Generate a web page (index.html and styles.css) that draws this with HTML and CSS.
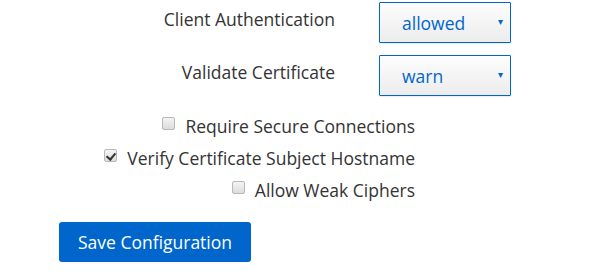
FILE: index.html
```html
<!DOCTYPE html>
<html lang="en">
<head>
    <meta charset="UTF-8">
    <meta name="viewport" content="width=device-width, initial-scale=1.0">
    <title>Configuration</title>
    <link rel="stylesheet" href="styles.css">
</head>
<body>

    <form class="config-form">
        <div class="select-rows">
            <label for="client_auth" class="select-label">Client Authentication</label>
            <div class="select-box">
                <select id="client_auth" name="client_auth">
                    <option>allowed</option>
                    <option>required</option>
                    <option>none</option>
                </select>
                <span class="arrow">&#9662;</span>
            </div>

            <label for="validate_cert" class="select-label">Validate Certificate</label>
            <div class="select-box">
                <select id="validate_cert" name="validate_cert">
                    <option>warn</option>
                    <option>strict</option>
                    <option>off</option>
                </select>
                <span class="arrow">&#9662;</span>
            </div>
        </div>

        <div class="check-rows">
            <label class="check"><input type="checkbox" name="secure"> Require Secure Connections</label>
            <label class="check"><input type="checkbox" name="hostname" checked> Verify Certificate Subject Hostname</label>
            <label class="check"><input type="checkbox" name="weak"> Allow Weak Ciphers</label>
        </div>

        <button type="button" class="save-btn">Save Configuration</button>
    </form>

</body>
</html>
```

FILE: styles.css
```css
* {
    margin: 0;
    padding: 0;
    box-sizing: border-box;
}

body {
    font-family: 'Open Sans', sans-serif;
    font-size: 17.5px;
    color: #333;
    background: #fff;
}

.config-form {
    padding-top: 2px;
}

/* select rows */
.select-rows {
    display: grid;
    grid-template-columns: 335px 132px;
    column-gap: 44px;
    row-gap: 12px;
    align-items: center;
}

.select-label {
    text-align: right;
    margin-top: -7px;
}

.select-box {
    position: relative;
    height: 41px;
}

.select-box select {
    -webkit-appearance: none;
    appearance: none;
    width: 100%;
    height: 100%;
    font-family: inherit;
    font-size: 17.5px;
    color: #0066cc;
    border: 1px solid #0066cc;
    border-radius: 1px;
    padding-left: 22px;
    background: linear-gradient(#fdfdfd, #ececec);
    box-shadow: 0 1px 1px rgba(0, 0, 0, 0.08);
}

.arrow {
    position: absolute;
    right: 8px;
    top: 12px;
    font-size: 10px;
    color: #0066cc;
    pointer-events: none;
}

/* checkboxes */
.check-rows {
    width: 415px;
    display: flex;
    flex-direction: column;
    align-items: flex-end;
    margin-top: 14px;
}

.check {
    height: 32px;
    line-height: 32px;
    display: flex;
    align-items: center;
}

.check input {
    -webkit-appearance: none;
    appearance: none;
    width: 13px;
    height: 13px;
    margin-right: 10px;
    margin-top: -6px;
    border: 1px solid #b8b8b8;
    border-radius: 2px;
    background: linear-gradient(#f4f4f4, #dcdcdc);
    position: relative;
}

.check input:checked::after {
    content: "";
    position: absolute;
    left: 3px;
    top: 1px;
    width: 4px;
    height: 7px;
    border: solid #333;
    border-width: 0 2px 2px 0;
    transform: rotate(40deg);
}

/* button */
.save-btn {
    margin: 16px 0 0 59px;
    width: 192px;
    height: 40px;
    background-color: #0066cc;
    color: #fff;
    border: none;
    border-radius: 3px;
    font-family: inherit;
    font-size: 17.5px;
    cursor: pointer;
}

.save-btn:hover {
    background-color: #004080;
}
```
